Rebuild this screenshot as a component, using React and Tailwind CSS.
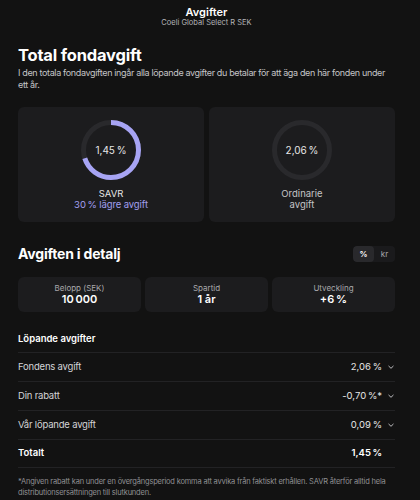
import React, { useState } from 'react';

const NNBSP = '\u202F';

function Ring({ value, progress }) {
  const r = 27.5;
  const c = 2 * Math.PI * r;
  return (
    <div className="relative w-[60px] h-[60px]">
      <svg width="60" height="60" viewBox="0 0 60 60" className="-rotate-90">
        <circle cx="30" cy="30" r={r} fill="none" stroke="#29292c" strokeWidth="5" />
        {progress > 0 && (
          <circle
            cx="30"
            cy="30"
            r={r}
            fill="none"
            stroke="#a7a4f4"
            strokeWidth="5"
            strokeDasharray={`${c * progress} ${c}`}
          />
        )}
      </svg>
      <div className="absolute inset-0 flex items-center justify-center text-[10px] tracking-[-0.2px] text-[#e6e6e6]">
        {value}
      </div>
    </div>
  );
}

function Stat({ label, value }) {
  return (
    <div className="flex-1 bg-[#1c1c1e] rounded-[6px] pt-[6px] pb-[7px] flex flex-col items-center">
      <span className="text-[8px] leading-[10px] text-[#a8a8ab]">{label}</span>
      <span className="text-[11px] leading-[12px] font-semibold text-white">{value}</span>
    </div>
  );
}

function Chevron() {
  return (
    <svg width="8" height="8" viewBox="0 0 8 8" fill="none" stroke="#bdbdc0" strokeWidth="1" strokeLinecap="round" strokeLinejoin="round">
      <path d="M1.8 3.2l2.2 2.1 2.2-2.1" />
    </svg>
  );
}

const ROWS = [
  { label: 'Fondens avgift', value: `2,06${NNBSP}%` },
  { label: 'Din rabatt', value: `-0,70${NNBSP}%*` },
  { label: 'Vår löpande avgift', value: `0,09${NNBSP}%` },
];

export default function App() {
  const [unit, setUnit] = useState('%');

  return (
    <div className="w-[420px] h-[500px] overflow-hidden bg-[#121212] text-white font-['Inter',sans-serif] pl-[18px] pr-[25px]">
      {/* Sheet header */}
      <div className="pt-[6px] flex flex-col items-center">
        <span className="text-[11px] leading-[12px] font-semibold">Avgifter</span>
        <span className="text-[7.5px] leading-[9px] text-[#b5b5b8]">Coeli Global Select R SEK</span>
      </div>

      <h1 className="mt-[17px] text-[16.5px] leading-[22px] font-bold tracking-[-0.2px]">Total fondavgift</h1>
      <p className="mt-[1px] text-[9px] leading-[12px] tracking-[-0.35px] text-[#c4c4c7]">
        <span className="whitespace-nowrap">
          I den totala fondavgiften ingår alla löpande avgifter du betalar för att äga den här fonden under
        </span>
        <br />
        ett år.
      </p>

      <div className="mt-[16px] flex gap-[5px]">
        <div className="flex-1 h-[115px] bg-[#1c1c1e] rounded-[6px] pt-[13px] flex flex-col items-center">
          <Ring value={`1,45${NNBSP}%`} progress={0.7} />
          <span className="mt-[8px] text-[9.5px] leading-[11px] text-[#e6e6e6]">SAVR</span>
          <span className="text-[9.5px] leading-[11px] tracking-[-0.1px] text-[#a29ff0]">30{NNBSP}% lägre avgift</span>
        </div>
        <div className="flex-1 h-[115px] bg-[#1c1c1e] rounded-[6px] pt-[13px] flex flex-col items-center">
          <Ring value={`2,06${NNBSP}%`} progress={0} />
          <span className="mt-[8px] text-[9.5px] leading-[11px] text-[#c4c4c7]">Ordinarie</span>
          <span className="text-[9.5px] leading-[11px] text-[#c4c4c7]">avgift</span>
        </div>
      </div>

      <div className="mt-[24px] flex items-center justify-between h-[16px]">
        <h2 className="text-[14px] leading-[16px] font-bold tracking-[-0.2px]">Avgiften i detalj</h2>
        <div className="flex h-[16px] rounded-[4px] bg-[#1a1a1c] overflow-hidden">
          {['%', 'kr'].map((u) => (
            <button
              key={u}
              onClick={() => setUnit(u)}
              className={`w-[21px] h-[16px] rounded-[4px] text-[8px] ${unit === u ? 'bg-[#29292c] text-white font-semibold' : 'text-[#a8a8ab]'}`}
            >
              {u}
            </button>
          ))}
        </div>
      </div>

      <div className="mt-[15px] flex gap-[4px]">
        <Stat label="Belopp (SEK)" value={`10${NNBSP}000`} />
        <Stat label="Spartid" value="1 år" />
        <Stat label="Utveckling" value={`+6${NNBSP}%`} />
      </div>

      <h3 className="mt-[20px] text-[9.5px] leading-[13px] font-semibold">Löpande avgifter</h3>

      <div className="mt-[7px] border-b border-[#222224]">
        {ROWS.map((row) => (
          <div key={row.label} className="h-[29px] border-t border-[#222224] flex items-center justify-between">
            <span className="text-[9.5px] tracking-[-0.2px] text-[#d4d4d7]">{row.label}</span>
            <div className="flex items-center gap-[5px]">
              <span className="text-[9.5px] tracking-[-0.2px] text-[#e6e6e6]">{row.value}</span>
              <Chevron />
            </div>
          </div>
        ))}
        <div className="h-[28px] border-t border-[#222224] flex items-center justify-between">
          <span className="text-[9.5px] font-semibold">Totalt</span>
          <div className="flex items-center gap-[5px]">
            <span className="text-[9.5px] tracking-[-0.2px] font-semibold">1,45{NNBSP}%</span>
            <span className="w-[8px]" />
          </div>
        </div>
      </div>

      <p className="mt-[8px] text-[7.5px] leading-[11px] tracking-[-0.2px] text-[#909093]">
        *Angiven rabatt kan under en övergångsperiod komma att avvika från faktiskt erhållen. SAVR återför alltid hela distributionsersättningen till slutkunden.
      </p>
    </div>
  );
}
